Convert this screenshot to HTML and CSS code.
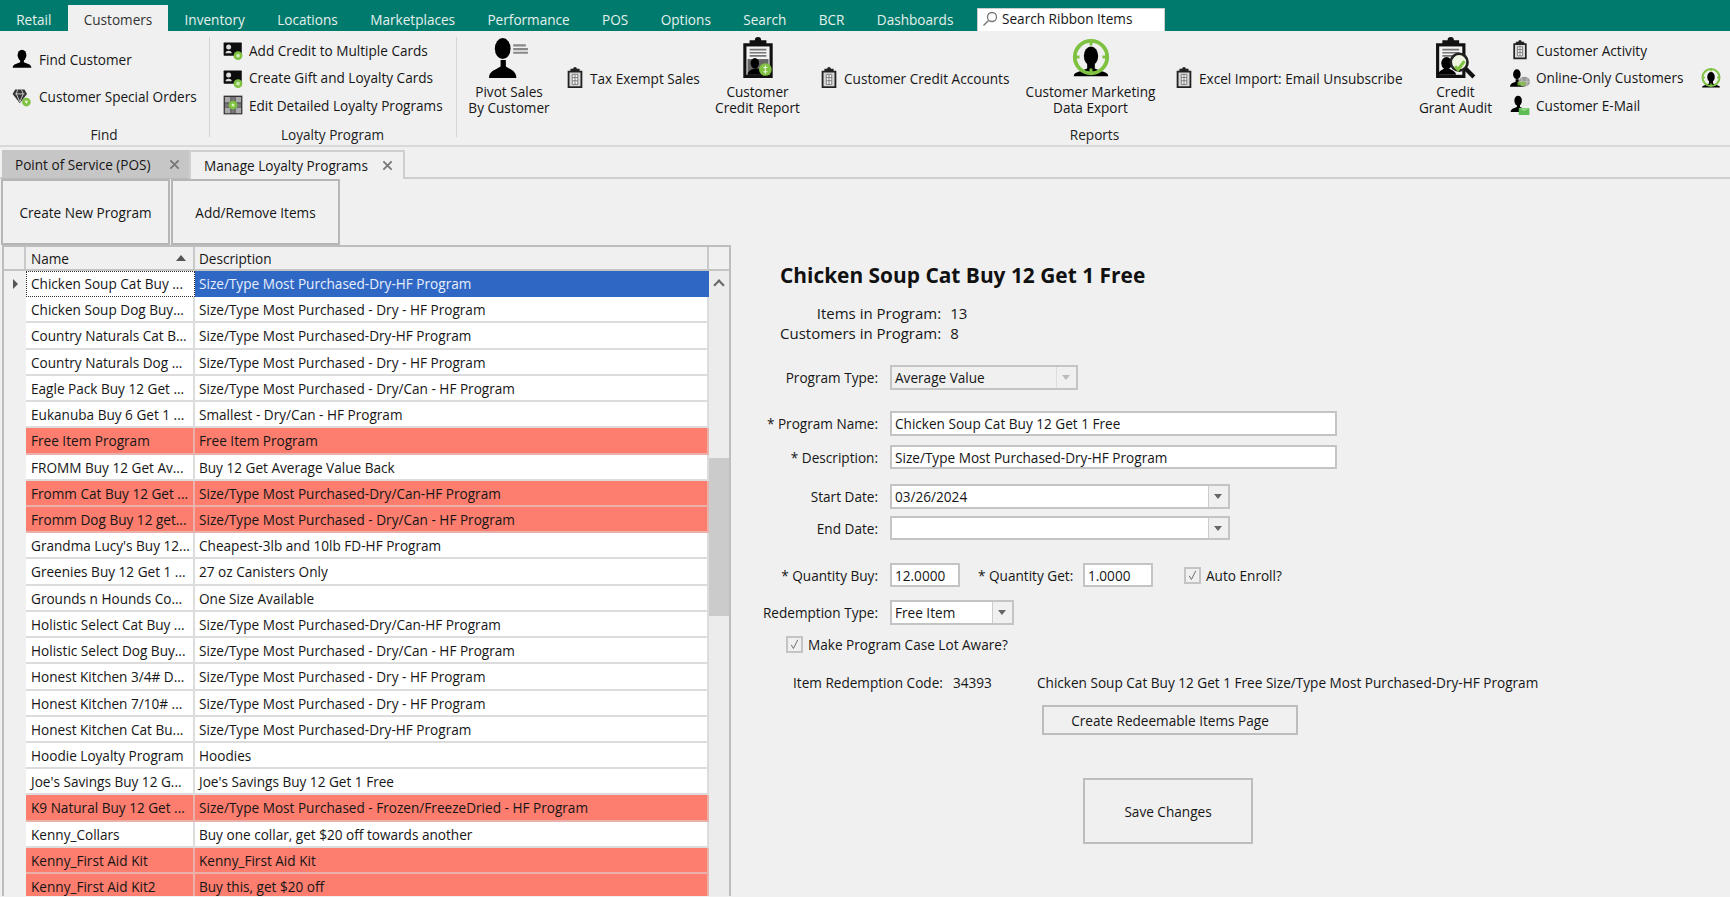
FILE: index.html
```html
<!DOCTYPE html>
<html lang="en">
<head>
<meta charset="utf-8">
<title>Manage Loyalty Programs</title>
<link rel="stylesheet" href="styles.css">
</head>
<body>
<svg class="defs" aria-hidden="true">
  <symbol id="i-person" viewBox="0 0 32 32"><ellipse cx="16" cy="10" rx="7" ry="9" fill="#000"/><path d="M1 30c0-3 2-5 5-6l7-3v-4h6v4l7 3c3 1 5 3 5 6z" fill="#000"/></symbol>
  <symbol id="i-clip" viewBox="0 0 18 24"><path d="M7 2a2 2 0 0 1 4 0h3v2h3v19H1V4h3V2z" fill="#222"/><rect x="3" y="6" width="12" height="15" fill="#d8d8d8"/><path d="M6 8h6v11H6zM6 11.500h6M6 15h6M9 8v11" fill="#f2f2f2" stroke="#777"/></symbol>
  <symbol id="i-gem" viewBox="0 0 32 32"><path d="M5 4h15l4 7-11.500 15L1 11z" fill="#333"/><path d="M5 11h15M9 4l-2 7 5.500 13L18 11l-3-7" fill="none" stroke="#ccc" stroke-width="1.500"/><circle cx="23" cy="24" r="7" fill="#7fc241"/><path d="M20 22h6l-3 5z" fill="#e9f5dc"/></symbol>
  <symbol id="i-card" viewBox="0 0 32 32"><rect x="1" y="4" width="29" height="21" rx="1" fill="#0d0d0d"/><circle cx="9" cy="11" r="4" fill="#ddd"/><path d="M4 21c0-3 3-4 5-4s5 1 5 4z" fill="#ddd"/><circle cx="24" cy="25" r="7" fill="#7fc241"/><circle cx="24" cy="25" r="3" fill="#cfe8b3"/></symbol>
  <symbol id="i-tile" viewBox="0 0 32 32"><rect x="1" y="1" width="30" height="30" fill="#333"/><path d="M3 3h9v9H3zM20 3h9v9h-9zM3 20h9v9H3zM20 20h9v9h-9z" fill="#a9a9a9"/><path d="M13 3h6v26h-6zM3 13h26v6H3z" fill="#777"/><circle cx="16" cy="16" r="7" fill="#7fc241"/><circle cx="16" cy="16" r="2.500" fill="#d9efc2"/></symbol>
  <symbol id="i-pivot" viewBox="0 0 40 40"><ellipse cx="14" cy="11" rx="7.500" ry="10" fill="#000"/><path d="M1 39c0-4 2-6 6-8l5-3v-6h5v6l5 3c3 2 5 4 5 8z" fill="#000"/><path d="M24 8h12M24 11.500h14M24 15h14" stroke="#888" stroke-width="2"/></symbol>
  <symbol id="i-report" viewBox="0 0 32 40"><path d="M13 3a3 3 0 0 1 6 0h5v3h6v33H2V6h6V3z" fill="#111"/><rect x="5" y="9" width="22" height="27" fill="#f3f3f3"/><path d="M8 12h16M8 15h16M8 18h16" stroke="#777" stroke-width="1.500"/><rect x="6" y="21" width="20" height="15" fill="#666"/><ellipse cx="13" cy="25" rx="4" ry="5" fill="#000"/><path d="M6 36c0-3 3-5 7-6s7 3 7 6z" fill="#000"/><circle cx="23" cy="31" r="6" fill="#7fc241"/><path d="M23 27v8M21 29h4M21 33h4" stroke="#e9f5dc"/></symbol>
  <symbol id="i-target" viewBox="0 0 44 40"><ellipse cx="22" cy="18" rx="7.500" ry="10" fill="#000"/><path d="M4 39c0-3 3-4 7-5l7-3v-5h8v5l7 3c4 1 7 2 7 5z" fill="#000"/><circle cx="22" cy="19" r="17" fill="none" stroke="#7fc241" stroke-width="4"/><path d="M22 1v6M22 31v6M4 19h6M34 19h6" stroke="#7fc241" stroke-width="3"/></symbol>
  <symbol id="i-audit" viewBox="0 0 40 40"><path d="M12 3a3 3 0 0 1 6 0h5v3h6v33H1V6h6V3z" fill="#111"/><rect x="4" y="9" width="22" height="27" fill="#f3f3f3"/><path d="M7 12h16M7 15h16M7 18h10" stroke="#777" stroke-width="1.500"/><ellipse cx="11" cy="25" rx="5" ry="6" fill="#000"/><path d="M3 36c0-3 4-6 8-6s9 3 9 6z" fill="#000"/><circle cx="23" cy="24" r="8" fill="#eef6e2" stroke="#222" stroke-width="2.500"/><path d="M19 28l3 3 6-8" fill="none" stroke="#7fc241" stroke-width="3"/><path d="M29 30l8 8" stroke="#111" stroke-width="4"/></symbol>
  <symbol id="i-online" viewBox="0 0 32 32"><ellipse cx="11" cy="10" rx="6" ry="8" fill="#000"/><path d="M0 30c0-3 2-5 4-6l5-2v-4h5v4l5 2c3 1 4 3 4 6z" fill="#000"/><ellipse cx="23" cy="22" rx="9" ry="8" fill="#999"/><path d="M15 22h17M19 16v13M27 16v13" stroke="#d8d8d8"/><rect x="12" y="22" width="13" height="6" fill="#7fc241" opacity=".8"/></symbol>
  <symbol id="i-mail" viewBox="0 0 32 32"><ellipse cx="13" cy="9" rx="6" ry="8" fill="#000"/><path d="M1 27c0-3 2-5 5-6l5-2v-3h5v3l5 2c3 1 5 3 5 6z" fill="#000"/><rect x="14" y="21" width="17" height="11" fill="#5fbb55"/><path d="M14 21l8.500 5 8.500-5" fill="#8fd883"/></symbol>
  <symbol id="i-search" viewBox="0 0 16 16"><circle cx="10" cy="6" r="4.500" fill="none" stroke="#777" stroke-width="1.300"/><path d="M6.500 9.500L1.500 14.500" stroke="#777" stroke-width="1.500"/></symbol>
  <symbol id="i-x" viewBox="0 0 12 12"><path d="M1.500 1.500l9 9M10.500 1.500l-9 9" stroke="#777" stroke-width="2"/></symbol>
  <symbol id="i-check" viewBox="0 0 16 18"><path d="M3.500 9.500l3 5 6-12" fill="none" stroke="#666" stroke-width="1.300"/></symbol>
</svg>

<header class="tabbar">
  <nav class="tabs">
    <span class="tab">Retail</span>
    <span class="tab tab-on">Customers</span>
    <span class="tab">Inventory</span>
    <span class="tab">Locations</span>
    <span class="tab">Marketplaces</span>
    <span class="tab">Performance</span>
    <span class="tab">POS</span>
    <span class="tab">Options</span>
    <span class="tab">Search</span>
    <span class="tab">BCR</span>
    <span class="tab">Dashboards</span>
  </nav>
  <div class="ribbon-search"><svg class="ico-search"><use href="#i-search"/></svg><span>Search Ribbon Items</span></div>
</header>

<section class="ribbon">
  <div class="group group-find">
    <div class="group-body stack stack-find">
      <div class="item"><svg class="ico-s"><use href="#i-person"/></svg><span>Find Customer</span></div>
      <div class="item"><svg class="ico-s"><use href="#i-gem"/></svg><span>Customer Special Orders</span></div>
    </div>
    <div class="group-label">Find</div>
  </div>
  <div class="group group-loyalty">
    <div class="group-body stack">
      <div class="item"><svg class="ico-s"><use href="#i-card"/></svg><span>Add Credit to Multiple Cards</span></div>
      <div class="item"><svg class="ico-s"><use href="#i-card"/></svg><span>Create Gift and Loyalty Cards</span></div>
      <div class="item"><svg class="ico-s"><use href="#i-tile"/></svg><span>Edit Detailed Loyalty Programs</span></div>
    </div>
    <div class="group-label">Loyalty Program</div>
  </div>
  <div class="group group-reports">
    <div class="group-body reports">
      <div class="large w-pivot"><svg class="ico-l"><use href="#i-pivot"/></svg><span>Pivot Sales<br>By Customer</span></div>
      <div class="item w-tax"><svg class="ico-c"><use href="#i-clip"/></svg><span>Tax Exempt Sales</span></div>
      <div class="large w-credit"><svg class="ico-l"><use href="#i-report"/></svg><span>Customer<br>Credit Report</span></div>
      <div class="item w-acct"><svg class="ico-c"><use href="#i-clip"/></svg><span>Customer Credit Accounts</span></div>
      <div class="large w-mkt"><svg class="ico-l"><use href="#i-target"/></svg><span>Customer Marketing<br>Data Export</span></div>
      <div class="item w-excel"><svg class="ico-c"><use href="#i-clip"/></svg><span>Excel Import: Email Unsubscribe</span></div>
      <div class="large w-audit"><svg class="ico-l"><use href="#i-audit"/></svg><span>Credit<br>Grant Audit</span></div>
      <div class="stack w-stack">
        <div class="item"><svg class="ico-s"><use href="#i-clip"/></svg><span>Customer Activity</span></div>
        <div class="item"><svg class="ico-s"><use href="#i-online"/></svg><span>Online-Only Customers</span></div>
        <div class="item"><svg class="ico-s"><use href="#i-mail"/></svg><span>Customer E-Mail</span></div>
      </div>
      <svg class="ico-t"><use href="#i-target"/></svg>
    </div>
    <div class="group-label">Reports</div>
  </div>
</section>

<div class="doctabs">
  <div class="doctab doctab-off"><span>Point of Service (POS)</span><svg class="ico-x"><use href="#i-x"/></svg></div>
  <div class="doctab doctab-on"><span>Manage Loyalty Programs</span><svg class="ico-x"><use href="#i-x"/></svg></div>
</div>

<main class="page">
  <div class="left">
    <div class="toolbar">
      <button class="tool-btn">Create New Program</button>
      <button class="tool-btn">Add/Remove Items</button>
    </div>
    <div class="grid">
      <div class="grid-head">
        <div class="hc"></div>
        <div class="hc hc-name"><span>Name</span><i class="sort"></i></div>
        <div class="hc">Description</div>
        <div class="hc hc-end"></div>
      </div>
      <div class="grid-body">
        <div class="rows">
          <div class="row row-sel"><div class="rh"><i class="rh-arrow"></i></div><div class="c c-name"><span>Chicken Soup Cat Buy ...</span></div><div class="c">Size/Type Most Purchased-Dry-HF Program</div></div>
          <div class="row"><div class="rh"></div><div class="c c-name">Chicken Soup Dog Buy...</div><div class="c">Size/Type Most Purchased - Dry - HF Program</div></div>
          <div class="row"><div class="rh"></div><div class="c c-name">Country Naturals Cat B...</div><div class="c">Size/Type Most Purchased-Dry-HF Program</div></div>
          <div class="row"><div class="rh"></div><div class="c c-name">Country Naturals Dog ...</div><div class="c">Size/Type Most Purchased - Dry - HF Program</div></div>
          <div class="row"><div class="rh"></div><div class="c c-name">Eagle Pack Buy 12 Get ...</div><div class="c">Size/Type Most Purchased - Dry/Can - HF Program</div></div>
          <div class="row"><div class="rh"></div><div class="c c-name">Eukanuba Buy 6 Get 1 ...</div><div class="c">Smallest - Dry/Can - HF Program</div></div>
          <div class="row row-red"><div class="rh"></div><div class="c c-name">Free Item Program</div><div class="c">Free Item Program</div></div>
          <div class="row"><div class="rh"></div><div class="c c-name">FROMM Buy 12 Get Av...</div><div class="c">Buy 12 Get Average Value Back</div></div>
          <div class="row row-red"><div class="rh"></div><div class="c c-name">Fromm Cat Buy 12 Get ...</div><div class="c">Size/Type Most Purchased-Dry/Can-HF Program</div></div>
          <div class="row row-red"><div class="rh"></div><div class="c c-name">Fromm Dog Buy 12 get...</div><div class="c">Size/Type Most Purchased - Dry/Can - HF Program</div></div>
          <div class="row"><div class="rh"></div><div class="c c-name">Grandma Lucy's Buy 12...</div><div class="c">Cheapest-3lb and 10lb FD-HF Program</div></div>
          <div class="row"><div class="rh"></div><div class="c c-name">Greenies Buy 12 Get 1 ...</div><div class="c">27 oz Canisters Only</div></div>
          <div class="row"><div class="rh"></div><div class="c c-name">Grounds n Hounds Co...</div><div class="c">One Size Available</div></div>
          <div class="row"><div class="rh"></div><div class="c c-name">Holistic Select Cat Buy ...</div><div class="c">Size/Type Most Purchased-Dry/Can-HF Program</div></div>
          <div class="row"><div class="rh"></div><div class="c c-name">Holistic Select Dog Buy...</div><div class="c">Size/Type Most Purchased - Dry/Can - HF Program</div></div>
          <div class="row"><div class="rh"></div><div class="c c-name">Honest Kitchen 3/4# D...</div><div class="c">Size/Type Most Purchased - Dry - HF Program</div></div>
          <div class="row"><div class="rh"></div><div class="c c-name">Honest Kitchen 7/10# ...</div><div class="c">Size/Type Most Purchased - Dry - HF Program</div></div>
          <div class="row"><div class="rh"></div><div class="c c-name">Honest Kitchen Cat Bu...</div><div class="c">Size/Type Most Purchased-Dry-HF Program</div></div>
          <div class="row"><div class="rh"></div><div class="c c-name">Hoodie Loyalty Program</div><div class="c">Hoodies</div></div>
          <div class="row"><div class="rh"></div><div class="c c-name">Joe's Savings Buy 12 G...</div><div class="c">Joe's Savings Buy 12 Get 1 Free</div></div>
          <div class="row row-red"><div class="rh"></div><div class="c c-name">K9 Natural Buy 12 Get ...</div><div class="c">Size/Type Most Purchased - Frozen/FreezeDried - HF Program</div></div>
          <div class="row"><div class="rh"></div><div class="c c-name">Kenny_Collars</div><div class="c">Buy one collar, get $20 off towards another</div></div>
          <div class="row row-red"><div class="rh"></div><div class="c c-name">Kenny_First Aid Kit</div><div class="c">Kenny_First Aid Kit</div></div>
          <div class="row row-red"><div class="rh"></div><div class="c c-name">Kenny_First Aid Kit2</div><div class="c">Buy this, get $20 off</div></div>
        </div>
        <div class="scroll"><i class="scroll-up"></i><div class="scroll-thumb"></div></div>
      </div>
    </div>
  </div>

  <div class="form">
    <h1 class="title">Chicken Soup Cat Buy 12 Get 1 Free</h1>
    <dl class="stats">
      <dt>Items in Program:</dt><dd>13</dd>
      <dt>Customers in Program:</dt><dd>8</dd>
    </dl>
    <div class="frow r-type"><label class="lab">Program Type:</label><div class="combo combo-off"><span>Average Value</span><i class="drop"></i></div></div>
    <div class="frow r-name"><label class="lab">* Program Name:</label><div class="field f-wide">Chicken Soup Cat Buy 12 Get 1 Free</div></div>
    <div class="frow r-desc"><label class="lab">* Description:</label><div class="field f-wide">Size/Type Most Purchased-Dry-HF Program</div></div>
    <div class="frow r-start"><label class="lab">Start Date:</label><div class="combo f-date"><span>03/26/2024</span><i class="drop"></i></div></div>
    <div class="frow r-end"><label class="lab">End Date:</label><div class="combo f-date"><span></span><i class="drop"></i></div></div>
    <div class="frow r-qty">
      <label class="lab">* Quantity Buy:</label><div class="field f-qty">12.0000</div>
      <label class="lab-get">* Quantity Get:</label><div class="field f-qty">1.0000</div>
      <div class="check check-auto"><span class="box"><svg class="ico-check"><use href="#i-check"/></svg></span><span>Auto Enroll?</span></div>
    </div>
    <div class="frow r-red"><label class="lab">Redemption Type:</label><div class="combo f-red"><span>Free Item</span><i class="drop"></i></div></div>
    <div class="check check-lot"><span class="box"><svg class="ico-check"><use href="#i-check"/></svg></span><span>Make Program Case Lot Aware?</span></div>
    <div class="code"><span class="code-l">Item Redemption Code:</span><span class="code-v">34393</span><span class="code-d">Chicken Soup Cat Buy 12 Get 1 Free Size/Type Most Purchased-Dry-HF Program</span></div>
    <button class="btn-redeem">Create Redeemable Items Page</button>
    <button class="btn-save">Save Changes</button>
  </div>
</main>
</body>
</html>
```

FILE: styles.css
```css
* { box-sizing: border-box; }
html, body { margin: 0; height: 100%; overflow: hidden; }
body { background: #f0f0f0; color: #161616; font: 13.600px/17px "Open Sans", "Liberation Sans", sans-serif; }
.defs { display: none; }
svg { display: block; flex: none; }

/* top tab strip */
.tabbar { display: flex; height: 31px; background: #007a6c; align-items: flex-end; justify-content: space-between; padding-right: 565px; }
.tabs { display: flex; height: 26px; }
.tab { padding: 3px 16.200px 0; color: #e4f1ee; line-height: 24px; white-space: nowrap; }
.tab-on { background: #f0f0f0; color: #333; padding: 3px 16px 0; }
.ribbon-search { display: flex; align-items: center; gap: 4px; width: 188px; height: 23px; padding: 0 0 3px 4px; background: #fff; border: 1px solid #ccc; border-bottom: 0; }
.ico-search { width: 16px; height: 16px; }

/* ribbon */
.ribbon { display: flex; height: 116px; border-bottom: 2px solid #d9d9d9; }
.group { display: flex; flex-direction: column; position: relative; }
.group-find { width: 210px; padding-left: 12px; }
.group-loyalty { width: 247px; padding-left: 13px; }
.group-reports { flex: 1; padding-left: 12px; }
.group-find::after, .group-loyalty::after { content: ""; position: absolute; right: 0; top: 6px; bottom: 8px; width: 1px; background: #d4d4d4; }
.group-body { height: 92px; }
.group-label { flex: 1; text-align: center; color: #222; line-height: 17px; margin-left: -12px; padding-top: 3px; }
.group-find .group-label { margin-left: -14px; }
.group-loyalty .group-label { margin-left: -15px; }
.group-reports .group-label { margin-left: -10px; }
.stack { display: flex; flex-direction: column; justify-content: flex-start; gap: 7.500px; padding-top: 9px; }
.stack-find { gap: 17.500px; padding-top: 18px; }
.item { display: flex; align-items: center; gap: 6px; white-space: nowrap; color: #161616; }
.stack-find .item { gap: 7px; }
.ico-s { width: 20px; height: 20px; }
.ico-c { width: 18px; height: 22px; }
.ico-l { width: 42px; height: 42px; }
.ico-t { width: 22px; height: 22px; margin-top: 36px; flex: none; }
.reports { display: flex; align-items: flex-start; }
.reports > .item { margin-top: 36px; }
.large { display: flex; flex-direction: column; align-items: center; text-align: center; white-space: nowrap; padding-top: 6px; line-height: 16px; color: #161616; }
.large span { margin-top: 5px; }
.w-pivot { width: 80px; }
.w-tax { width: 131px; margin-left: 17px; }
.w-credit { width: 87px; margin-left: 17px; }
.w-acct { width: 188px; margin-left: 19px; }
.w-mkt { width: 131px; margin-left: 17px; }
.w-excel { width: 226px; margin-left: 19px; }
.w-audit { width: 75px; margin-left: 17px; }
.w-stack { width: 190px; margin-left: 17px; }

/* document tabs */
.doctabs { display: flex; height: 32px; padding: 3px 0 0 2px; border-bottom: 2px solid #cfcfcf; }
.doctab { display: flex; align-items: center; justify-content: space-between; height: 29px; padding: 0 9px 0 13px; }
.doctab-off { width: 187px; background: #c6c6c6; border-bottom: 1px solid #bbb; }
.doctab-on { width: 216px; padding: 0 10px 0 13px; border: 2px solid #cfcfcf; border-bottom: 0; background: #f0f0f0; }
.ico-x { width: 11px; height: 11px; }

/* page */
.page { display: flex; height: 717px; overflow: hidden; }
.left { width: 731px; padding-left: 2px; flex: none; }
.toolbar { display: flex; height: 66px; gap: 1px; margin-left: -1px; }
.tool-btn { width: 169px; height: 66px; background: #f0f0f0; border: 2px solid #b6b6b6; font: inherit; color: #161616; padding: 0; }
.grid { border: 2px solid #bdbdbd; border-bottom: 0; height: 660px; overflow: hidden; }
.grid-head { display: grid; grid-template-columns: 22px 169px 514px 22px; height: 24px; border-bottom: 2px solid #c4c4c4; }
.hc { display: flex; align-items: center; justify-content: space-between; padding: 0 4px; border-right: 2px solid #c9c9c9; color: #161616; }
.hc-end { border-right: 0; }
.hc-name { padding: 0 7px 0 5px; }
.sort { width: 0; height: 0; border: 5px solid transparent; border-top: 0; border-bottom: 6px solid #555; }
.grid-body { display: flex; }
.rows { width: 705px; flex: none; }
.row { display: grid; grid-template-columns: 22px 169px 514px; height: 26.220px; }
.rh { position: relative; }
.rh-arrow { position: absolute; left: 9px; top: 8px; border: 5px solid transparent; border-left: 5px solid #555; border-right: 0; }
.c { padding: 0 4px; line-height: 25.500px; background: #fff; border-right: 2px solid #dcdcdc; border-bottom: 2px solid #dcdcdc; white-space: nowrap; overflow: hidden; }
.c-name { padding: 0 2px 0 5px; }
.row-red .c { background: #fd7d6e; border-color: #e9b1aa; }
.row-sel .c { background: #2f68c4; color: #e8eefc; border-color: #2f68c4; }
.row-sel .c-name { background: #fff; color: #161616; border: 1px dotted #333; padding: 0 2px 0 4px; line-height: 23px; }
.scroll { flex: 1; background: #ececec; }
.scroll-up { display: block; width: 8px; height: 8px; margin: 10px auto 0; border-top: 2px solid #666; border-left: 2px solid #666; transform: rotate(45deg); }
.scroll-thumb { height: 158px; margin-top: 169px; background: #cbcbcb; }

/* form */
.form { flex: 1; padding: 83px 0 0 0; }
.title { margin: 0 0 0 49px; font-size: 20.900px; line-height: 26px; font-weight: 700; color: #111; }
.stats { display: grid; grid-template-columns: auto auto; justify-content: start; column-gap: 9px; margin: 15px 0 0 49px; font-size: 15px; line-height: 20px; }
.stats dt { text-align: right; }
.stats dd { margin: 0; }
.frow { display: flex; align-items: center; height: 25px; }
.lab { width: 147px; margin-right: 12px; text-align: right; white-space: nowrap; flex: none; }
.lab-get { width: 94px; margin: 0 11px 0 18px; text-align: right; white-space: nowrap; flex: none; }
.field, .combo { height: 100%; background: #fff; border: 2px solid #c4c4c4; padding: 0 3px; line-height: 21px; white-space: nowrap; flex: none; }
.combo { display: flex; justify-content: space-between; padding-right: 0; }
.combo-off { width: 188px; background: #f0f0f0; }
.combo-off .drop { border-left-color: #ddd; }
.combo-off .drop::after { border-top-color: #bbb; }
.drop { position: relative; width: 20px; border-left: 1px solid #ccc; background: #f0f0f0; flex: none; }
.drop::after { content: ""; position: absolute; left: 5px; top: 8px; border: 4px solid transparent; border-top: 5px solid #666; border-bottom: 0; }
.f-wide { width: 447px; }
.f-date { width: 340px; }
.f-qty { width: 70px; }
.f-red { width: 124px; }
.r-type { margin-top: 22px; }
.r-name { margin-top: 21px; }
.r-desc { margin-top: 9px; height: 24px; }
.r-start { margin-top: 15px; }
.r-end { margin-top: 7px; height: 24px; }
.r-qty { margin-top: 23px; height: 24px; }
.r-red { margin-top: 13px; }
.check { display: flex; align-items: center; gap: 5px; white-space: nowrap; }
.box { width: 17px; height: 17px; border: 2px solid #c4c4c4; background: #f0f0f0; flex: none; }
.ico-check { width: 13px; height: 13px; }
.check-auto { margin-left: 31px; }
.check-lot { margin: 11px 0 0 55px; height: 17px; }
.code { display: flex; margin: 21px 0 0 62px; white-space: nowrap; height: 17px; }
.code-l { width: 160px; }
.code-v { width: 84px; }
.btn-redeem { display: block; width: 256px; height: 30px; margin: 14px 0 0 311px; background: #f0f0f0; border: 2px solid #bdbdbd; font: inherit; color: #161616; padding: 0; }
.btn-save { display: block; width: 170px; height: 66px; margin: 43px 0 0 352px; background: #f0f0f0; border: 2px solid #bdbdbd; font: inherit; color: #161616; padding: 0; }
```
